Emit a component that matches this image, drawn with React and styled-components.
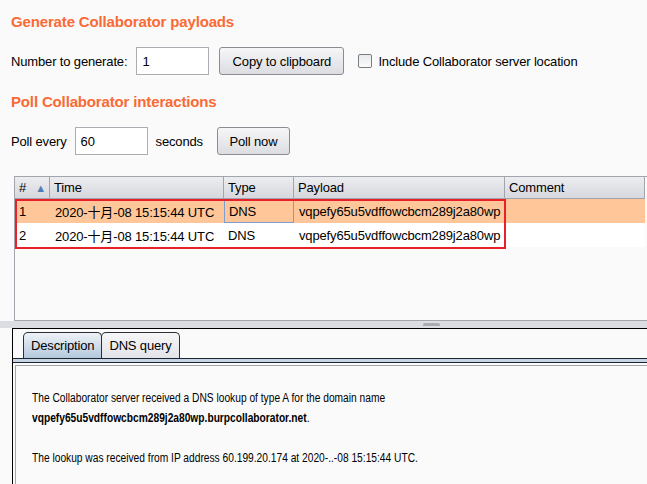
import React from 'react'
import styled, { createGlobalStyle } from 'styled-components'

const GlobalStyle = createGlobalStyle`
  html, body {
    margin: 0;
    padding: 0;
    background: #fafafa;
  }
  body {
    font-family: "Liberation Sans", Arial, "Noto Sans CJK SC", sans-serif;
    font-size: 13px;
    letter-spacing: -0.15px;
    color: #000;
    width: 647px;
    height: 484px;
    overflow: hidden;
  }
`

const Page = styled.div`
  display: flex;
  flex-direction: column;
  height: 484px;
  & > * {
    flex-shrink: 0;
  }
`
const Top = styled.div`
  padding: 12px 0 0 11px;
`
const SectionTitle = styled.div`
  color: #f96a35;
  font-weight: bold;
  font-size: 15px;
  letter-spacing: -0.15px;
  line-height: 20px;
  margin-top: ${p => p.gap || 0}px;
`
const FormRow = styled.div`
  display: flex;
  align-items: center;
  height: 28px;
  margin-top: 15px;
`
const Label = styled.span`
  margin-right: ${p => p.gap || 0}px;
  white-space: nowrap;
`
const TextInput = styled.div`
  box-sizing: border-box;
  width: 73px;
  height: 28px;
  border: 1px solid #abadb3;
  background: #fff;
  padding: 0 5px;
  display: flex;
  align-items: center;
  margin-right: ${p => p.gap || 0}px;
`
const Button = styled.div`
  box-sizing: border-box;
  height: 28px;
  width: ${p => p.w}px;
  border: 1px solid #8a8c92;
  border-radius: 3px;
  background: linear-gradient(#f6f6f7, #dcdde2);
  display: flex;
  align-items: center;
  justify-content: center;
  margin-right: ${p => p.gap || 0}px;
`
const Check = styled.div`
  box-sizing: border-box;
  width: 14px;
  height: 14px;
  border: 1px solid #7b7d84;
  border-radius: 2px;
  background: linear-gradient(#e9eaed, #fbfbfb);
  margin-right: 6px;
`

const TableArea = styled.div`
  position: relative;
  margin: 21px 0 0 14px;
  height: 145px;
  box-sizing: border-box;
  border-top: 1px solid #a3a5ad;
  border-left: 1px solid #a3a5ad;
  border-bottom: 1px solid #a3a5ad;
`
const Grid = styled.div`
  display: grid;
  grid-template-columns: 35px 174px 70px 211px 140px;
`
const HeadCell = styled.div`
  height: 22px;
  box-sizing: border-box;
  border-right: 1px solid #a3a5ad;
  border-bottom: 1px solid #a3a5ad;
  background: linear-gradient(#ecedf0, #d6d8de);
  padding-left: 4px;
  display: flex;
  align-items: center;
  justify-content: space-between;
`
const SortArrow = styled.span`
  color: #4d7fb5;
  font-size: 11px;
  margin-right: 3px;
`
const Cell = styled.div`
  height: 24px;
  box-sizing: border-box;
  padding-left: ${p => p.pad || 5}px;
  display: flex;
  align-items: center;
  white-space: nowrap;
  background: ${p => (p.selected ? '#ffc699' : '#fff')};
  border: ${p => (p.focus ? '1px solid #7d9fd0' : 'none')};
`
const RedBox = styled.div`
  position: absolute;
  left: 0;
  top: 22px;
  width: 491px;
  height: 50px;
  box-sizing: border-box;
  border: 2px solid #e8202a;
`

const Splitter = styled.div`
  height: 7px;
  background: #dcdde3;
  display: flex;
  justify-content: center;
  padding-left: 215px;
  box-sizing: border-box;
`
const Grip = styled.div`
  width: 17px;
  height: 3px;
  margin-top: 2px;
  background: #a9abb3;
  border-radius: 2px 2px 0 0;
`

const Bottom = styled.div`
  flex: 1 1 auto;
  min-height: 0;
  overflow: hidden;
  margin-left: 12px;
  border-top: 1px solid #000;
  border-left: 1px solid #000;
  display: flex;
  flex-direction: column;
  & > * {
    flex-shrink: 0;
  }
`
const TabStrip = styled.div`
  display: flex;
  padding: 3px 0 0 10px;
  border-bottom: 1px solid #1c2430;
`
const Tab = styled.div`
  height: 26px;
  box-sizing: border-box;
  padding: 0 7px;
  display: flex;
  align-items: center;
  border: 1px solid #2a2f38;
  border-bottom: none;
  border-radius: 5px 5px 0 0;
  margin-left: ${p => (p.active ? 0 : -1)}px;
  background: ${p =>
    p.active ? 'linear-gradient(#eef2f6, #b4c9dd)' : 'linear-gradient(#f6f6f7, #e3e4e8)'};
`
const TabBand = styled.div`
  height: 3px;
  background: #c6d4e5;
  border-bottom: 1px solid #1c2430;
`
const Content = styled.div`
  flex: 1 1 auto;
  margin: 2px 0 0 2px;
  border-top: 1px solid #a3a5ad;
  border-left: 1px solid #a3a5ad;
  padding: 22px 0 0 16px;
`
const Para = styled.p`
  margin: 0 0 20px;
  font-size: 12.5px;
  letter-spacing: 0;
  line-height: 20px;
  white-space: nowrap;
  transform: scaleX(0.817);
  transform-origin: left top;
`

const rows = [
  { id: 1, time: '2020-十月-08 15:15:44 UTC', type: 'DNS', payload: 'vqpefy65u5vdffowcbcm289j2a80wp' },
  { id: 2, time: '2020-十月-08 15:15:44 UTC', type: 'DNS', payload: 'vqpefy65u5vdffowcbcm289j2a80wp' }
]

export default function App() {
  return (
    <Page>
      <GlobalStyle />
      <Top>
        <SectionTitle>Generate Collaborator payloads</SectionTitle>
        <FormRow>
          <Label gap={9}>Number to generate:</Label>
          <TextInput gap={10}>1</TextInput>
          <Button w={125} gap={14}>Copy to clipboard</Button>
          <Check />
          <Label>Include Collaborator server location</Label>
        </FormRow>
        <SectionTitle gap={17}>Poll Collaborator interactions</SectionTitle>
        <FormRow>
          <Label gap={8}>Poll every</Label>
          <TextInput gap={8}>60</TextInput>
          <Label gap={14}>seconds</Label>
          <Button w={73}>Poll now</Button>
        </FormRow>
      </Top>
      <TableArea>
        <Grid>
          <HeadCell>#<SortArrow>▲</SortArrow></HeadCell>
          <HeadCell>Time</HeadCell>
          <HeadCell>Type</HeadCell>
          <HeadCell>Payload</HeadCell>
          <HeadCell>Comment</HeadCell>
          {rows.map(r => (
            <React.Fragment key={r.id}>
              <Cell pad={4} selected={r.id === 1}>{r.id}</Cell>
              <Cell selected={r.id === 1}>{r.time}</Cell>
              <Cell selected={r.id === 1} focus={r.id === 1} pad={4}>{r.type}</Cell>
              <Cell selected={r.id === 1}>{r.payload}</Cell>
              <Cell selected={r.id === 1} />
            </React.Fragment>
          ))}
        </Grid>
        <RedBox />
      </TableArea>
      <Splitter><Grip /></Splitter>
      <Bottom>
        <TabStrip>
          <Tab active>Description</Tab>
          <Tab>DNS query</Tab>
        </TabStrip>
        <TabBand />
        <Content>
          <Para>
            The Collaborator server received a DNS lookup of type A for the domain name<br />
            <b>vqpefy65u5vdffowcbcm289j2a80wp.burpcollaborator.net</b>.
          </Para>
          <Para>The lookup was received from IP address 60.199.20.174 at 2020-..-08 15:15:44 UTC.</Para>
        </Content>
      </Bottom>
    </Page>
  )
}
